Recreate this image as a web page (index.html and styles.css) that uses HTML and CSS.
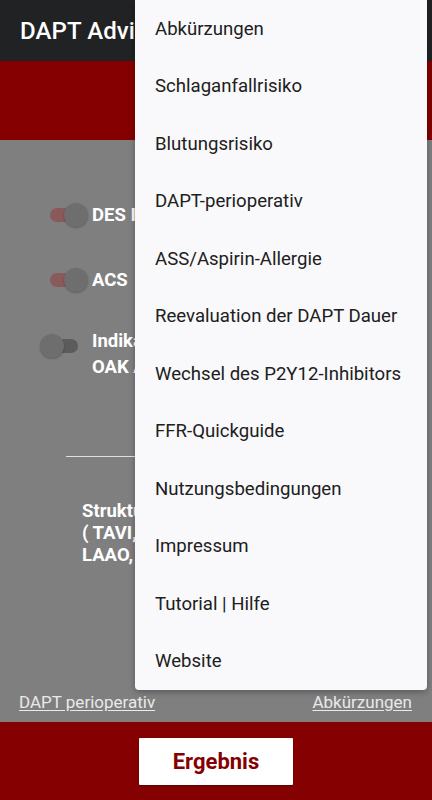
FILE: index.html
```html
<!DOCTYPE html>
<html lang="de">
<head>
<meta charset="utf-8">
<title>DAPT Advisor</title>
<link rel="stylesheet" href="styles.css">
</head>
<body>
<div class="app">
  <header class="toolbar"><h1 class="title">DAPT Advisor</h1></header>
  <div class="band"></div>
  <main class="content">
    <div class="row row-des">
      <span class="switch on"><span class="track"></span><span class="thumb"></span></span>
      <span class="label">DES Implantation</span>
    </div>
    <div class="row row-acs">
      <span class="switch on"><span class="track"></span><span class="thumb"></span></span>
      <span class="label">ACS</span>
    </div>
    <div class="row row-oak">
      <span class="switch"><span class="track"></span><span class="thumb"></span></span>
      <span class="label">Indikation für orale<br>OAK Antikoagulation</span>
    </div>
    <hr class="divider">
    <p class="struct">Strukturelle Intervention<br>( TAVI, MitraClip,<br>LAAO, PFO-Verschluss )</p>
    <div class="spacer"></div>
    <div class="links">
      <a class="link" href="#">DAPT perioperativ</a>
      <a class="link" href="#">Abkürzungen</a>
    </div>
  </main>
  <footer class="bottom">
    <button class="result">Ergebnis</button>
  </footer>
  <ul class="menu">
    <li>Abkürzungen</li>
    <li>Schlaganfallrisiko</li>
    <li>Blutungsrisiko</li>
    <li>DAPT-perioperativ</li>
    <li>ASS/Aspirin-Allergie</li>
    <li>Reevaluation der DAPT Dauer</li>
    <li>Wechsel des P2Y12-Inhibitors</li>
    <li>FFR-Quickguide</li>
    <li>Nutzungsbedingungen</li>
    <li>Impressum</li>
    <li>Tutorial | Hilfe</li>
    <li>Website</li>
  </ul>
</div>
</body>
</html>
```
FILE: styles.css
```css
* { box-sizing: border-box; }
html, body { margin: 0; padding: 0; }
body { font-family: Roboto, "Noto Sans", sans-serif; background: #7f7f7f; }
.app { position: relative; width: 432px; height: 800px; display: flex; flex-direction: column; overflow: hidden; }
.toolbar { height: 61px; background: #212224; display: flex; align-items: center; padding-left: 20px; }
.title { margin: 0; max-width: 115px; overflow: hidden; color: #ffffff; font-size: 24px; font-weight: 500; letter-spacing: 0.1px; white-space: nowrap; }
.band { height: 79px; background: #850000; }
.content { flex: 1; background: #7f7f7f; display: flex; flex-direction: column; }
.row { display: flex; align-items: flex-start; padding-left: 40px; white-space: nowrap; }
.row-des { margin-top: 62px; }
.row-acs { margin-top: 39px; }
.row-oak { margin-top: 35px; }
.label { margin-left: 4px; max-width: 43px; overflow: hidden; color: #ffffff; font-weight: 700; font-size: 18.5px; line-height: 26px; }
.switch { position: relative; width: 48px; height: 26px; flex: none; }
.row-oak .switch { margin-top: 5px; }
.track { position: absolute; left: 10px; top: 6px; width: 28px; height: 14px; border-radius: 7px; background: #5c5c5c; }
.thumb { position: absolute; left: 0; top: 1px; width: 24px; height: 24px; border-radius: 50%; background: #6e6e6e; box-shadow: 0 1px 2px rgba(0,0,0,0.25); }
.switch.on .track { background: #8a5a5a; }
.switch.on .thumb { left: 24px; top: 1px; }
.divider { margin: 76px 66px 0 66px; border: 0; height: 1px; background: #e0e0e0; }
.struct { margin: 43px 0 0 82px; width: 53px; overflow: hidden; color: #ffffff; font-weight: 700; font-size: 18.5px; line-height: 22px; white-space: nowrap; }
.spacer { flex: 1; }
.links { display: flex; justify-content: space-between; padding: 0 20px 10px 19px; }
.link { color: #e9e9e9; font-size: 17px; line-height: 20px; text-decoration: underline; text-underline-offset: 2px; }
.bottom { height: 78px; background: #850000; display: flex; justify-content: center; align-items: flex-start; padding-top: 16px; }
.result { width: 154px; height: 47px; background: #ffffff; border: 0; border-radius: 1px; box-shadow: 0 1px 2px rgba(0,0,0,0.35); color: #850000; font-family: Roboto, sans-serif; font-weight: 700; font-size: 22px; }
.menu { position: absolute; top: 0; left: 135px; width: 292px; height: 690px; margin: 0; padding: 0; list-style: none; background: #f9f9fb; border-radius: 0 0 4px 4px; box-shadow: 0 2px 6px rgba(0,0,0,0.3); }
.menu li { height: 57.5px; display: flex; align-items: center; padding-left: 20px; color: #202020; font-size: 18.6px; white-space: nowrap; }
```
